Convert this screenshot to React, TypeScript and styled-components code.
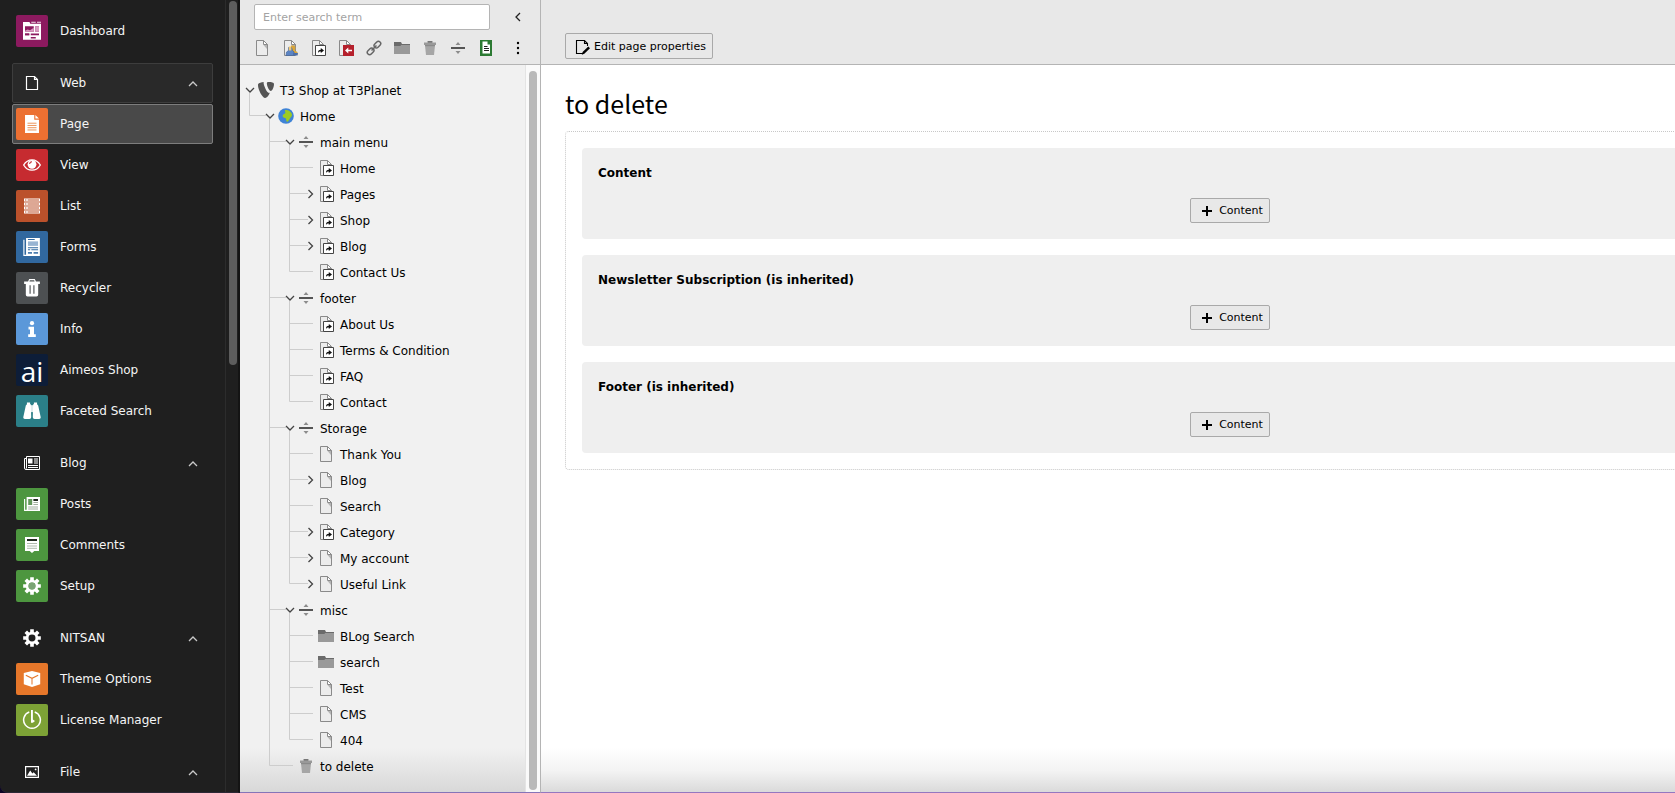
import React from 'react';
import styled, { createGlobalStyle } from 'styled-components';

const GlobalStyle = createGlobalStyle`
  *, *::before, *::after { box-sizing: border-box; }
  body {
    margin: 0;
    overflow: hidden;
    background: #0d0526;
    color: #000;
    font: 12px/18px Verdana, "DejaVu Sans", sans-serif;
  }
  button, input { font: inherit; color: inherit; }
  button { cursor: pointer; }
  ul { list-style: none; margin: 0; padding: 0; }
  svg { display: block; }
`;

/* ---------- shell ---------- */

const Shell = styled.div`
  display: flex;
  height: 100vh;
  overflow: hidden;
`;

const ModuleMenu = styled.nav`
  flex: 0 0 240px;
  display: flex;
  background: #1f1f1f;
  color: #f5f5f5;
  border-right: 2px solid #141414;
  border-bottom: 1px solid #2b2735;
  border-bottom-left-radius: 8px;
  overflow: hidden;
`;

const ModuleList = styled.div`
  flex: 1;
  min-width: 0;
  padding: 11px 12px 0;
  border-right: 1px solid #2c2c2c;
  overflow: hidden;
`;

const ScrollTrack = styled.div<{ $light?: boolean }>`
  flex: 0 0 ${p => (p.$light ? 15 : 12)}px;
  padding: ${p => (p.$light ? '6px 3px 2px' : '1px 1px 0 3px')};
  background: ${p => (p.$light ? '#fafafa' : 'transparent')};
  border-left: ${p => (p.$light ? '1px solid #e4e4e4' : '0')};
`;

const ScrollThumb = styled.div<{ $light?: boolean }>`
  height: ${p => (p.$light ? '100%' : '46%')};
  border-radius: 4px;
  background: ${p => (p.$light ? '#b9b9b9' : '#5d5d5d')};
`;

const ModuleGroup = styled.ul`
  display: flex;
  flex-direction: column;
  gap: 1px;
  margin-bottom: 12px;
`;

const ModuleButton = styled.button<{ $state?: 'active' | 'hover' }>`
  display: flex;
  align-items: center;
  gap: 12px;
  width: 100%;
  height: 40px;
  padding: 0 13px 0 3px;
  text-align: left;
  border-radius: 2px;
  border: 1px solid ${p => (p.$state === 'active' ? '#7d7d7d' : p.$state === 'hover' ? '#3d3d3d' : 'transparent')};
  background: ${p => (p.$state === 'active' ? '#494949' : p.$state === 'hover' ? '#292929' : 'transparent')};
`;

const ModuleIcon = styled.span<{ $color?: string }>`
  display: grid;
  place-items: center;
  flex: 0 0 32px;
  height: 32px;
  border-radius: 2px;
  color: #fff;
  background: ${p => p.$color || 'transparent'};
`;

const ModuleName = styled.span`
  flex: 1;
`;

/* ---------- page tree ---------- */

const TreePanel = styled.aside`
  flex: 0 0 301px;
  display: flex;
  flex-direction: column;
  background: #f1f1f1;
  border-right: 1px solid #b4b4b4;
  border-bottom: 1px solid #8674b8;
`;

const TreeHeader = styled.header`
  flex: 0 0 65px;
  padding: 4px 13px 0 14px;
  background: #e8e8e8;
  border-bottom: 1px solid #b4b4b4;
`;

const SearchRow = styled.div`
  display: flex;
  justify-content: space-between;
`;

const SearchInput = styled.input`
  width: 236px;
  height: 26px;
  padding: 0 8px;
  border: 1px solid #b4b4b4;
  border-radius: 2px;
  background: #fff;
  font-size: 11px;
  outline: none;
  &::placeholder { color: #a3a3a3; opacity: 1; }
`;

const IconButton = styled.button`
  display: grid;
  place-items: center;
  width: 18px;
  height: 26px;
  padding: 0;
  border: 0;
  background: none;
`;

const ToolRow = styled.div`
  display: flex;
  gap: 10px;
  margin: 5px 0 0 -1px;
  & > :last-child { margin-left: auto; }
`;

const TreeBody = styled.div`
  flex: 1;
  min-height: 0;
  display: flex;
  background: linear-gradient(to top, #d8d8d8, #f1f1f1 44px);
`;

const Tree = styled.ul`
  flex: 1;
  min-width: 0;
  padding: 13px 0 0 4px;
  overflow: hidden;
`;

const TreeRow = styled.li`
  display: flex;
  height: 26px;
  line-height: 26px;
  white-space: nowrap;
  & > svg { flex: none; overflow: visible; }
`;

const NodeIcon = styled.span`
  flex: 0 0 16px;
  margin: 4px 6px 0 2px;
`;

/* ---------- content ---------- */

const Content = styled.main`
  flex: 1;
  min-width: 0;
  overflow: hidden;
  display: flex;
  flex-direction: column;
  background: linear-gradient(to top, #dadada, #f4f4f4 22px, #fff 44px);
  border-bottom: 1px solid #9577c0;
`;

const DocHeader = styled.header`
  flex: 0 0 65px;
  display: flex;
  align-items: flex-start;
  padding: 33px 24px 0;
  background: #e8e8e8;
  border-bottom: 1px solid #b4b4b4;
`;

const Button = styled.button<{ $tall?: boolean }>`
  display: inline-flex;
  align-items: center;
  gap: 4px;
  height: ${p => (p.$tall ? 26 : 25)}px;
  padding: 1px 6px 0 8px;
  border: 1px solid #a9a9a9;
  border-radius: 2px;
  background: #e8e8e8;
  font-size: 11px;
  line-height: 16px;
`;

const DocBody = styled.div`
  min-width: 1378px;
  padding: 22px 24px 24px;
`;

const PageTitle = styled.h1`
  margin: 0 0 12px;
  font: 400 25px/32px "Noto Sans CJK SC", sans-serif;
`;

const Grid = styled.div`
  display: flex;
  flex-direction: column;
  gap: 16px;
  padding: 16px;
  border: 1px dotted #c8c8c8;
  border-radius: 4px;
`;

const Column = styled.section`
  display: flex;
  flex-direction: column;
  align-items: center;
  gap: 16px;
  padding: 16px;
  border-radius: 4px;
  background: #efefef;
`;

const ColumnTitle = styled.h2`
  align-self: stretch;
  margin: 0;
  font-size: 12px;
  line-height: 18px;
  font-weight: 700;
`;

/* ---------- glyphs ---------- */

const S = ({ size = 16, children }: { size?: number; children: React.ReactNode }) => (
  <svg width={size} height={size} viewBox="0 0 16 16" fill="currentColor" aria-hidden="true">{children}</svg>
);

const gearPath = (() => {
  const pts: string[] = [];
  for (let i = 0; i < 8; i++) {
    const a = (i * Math.PI) / 4;
    [[-0.3, 5.6], [-0.2, 8], [0.2, 8], [0.3, 5.6]].forEach(([d, r]) => {
      pts.push(`${(8 + r * Math.sin(a + d)).toFixed(2)} ${(8 - r * Math.cos(a + d)).toFixed(2)}`);
    });
  }
  return `M${pts.join('L')}Z M8 4.9a3.1 3.1 0 1 0 0 6.2 3.1 3.1 0 0 0 0-6.2Z`;
})();

const newsPaper = (
  <>
    <path d="M2.5 1.5H15.5V14.5H2A1.5 1.5 0 0 1 .5 13V3.5H2.500z" fill="none" stroke="currentColor" />
    <path d="M2.500 2v11.500" stroke="currentColor" />
    <path d="M4 3.500h4.500v5H4zM10 3.500h4v1h-4zM10 5.500h4v1h-4zM10 7.500h4v1h-4zM4 10h10v1H4zM4 12h10v1H4z" />
  </>
);

const moduleGlyphs: Record<string, React.ReactNode> = {
  dashboard: (
    <S size={20}>
      <path d="M.8 .8h5.200l.6 1.400h8.600V15H.8z" />
      <path d="M7.400 1h3.600M12 1H15.200" stroke="#fff" strokeWidth=".7" />
      <path d="M2.400 4.200h7v4.400h-7zM10.600 4.200h3v4.400h-3zM2.400 10h3.400v1.400H2.400zM7 10h6.600v1.400H7zM7 12.800h4V14H7z" fill="#8c1a5f" />
      <path d="M2.400 7.800l2-1 2 .5 3-2v3.300h-7zM10.600 4.200h3v4.400h-3z" fill="#d79bbf" />
      <path d="M2.400 10h3.400v1.400H2.400z" fill="#8c1a5f" />
    </S>
  ),
  web: <S><path d="M2.500 1.500H10.500L13.500 4.500V14.500H2.500zM10.500 1.500V4.500H13.500" fill="none" stroke="currentColor" strokeWidth="1.200" /></S>,
  page: (
    <S size={18}>
      <path d="M1.800 0H10v4.200h4.200V16H1.800z" /><path d="M11 0l3.200 3.200H11z" />
      <path d="M4 7.300h8M4 9.300h8M4 11.300h8M4 13.300h8" stroke="#e98a4b" strokeWidth=".8" />
    </S>
  ),
  view: (
    <S size={18}>
      <path d="M.6 8C2.400 4.900 5 3.400 8 3.400S13.600 4.900 15.400 8C13.600 11.100 11 12.600 8 12.600S2.400 11.100.6 8z" fill="none" stroke="currentColor" strokeWidth="1.200" />
      <circle cx="8" cy="7.400" r="3.900" /><path d="M5.900 7.200A2.200 2.200 0 0 1 8 5.100" fill="none" stroke="#c62b30" strokeWidth=".9" />
    </S>
  ),
  list: (
    <S>
      <path d="M0 .5h16v3H0zM0 4.500h16v3H0zM0 8.500h16v3H0zM0 12.500h16v3H0z" />
      <path d="M1 2h1.400M3.600 2H15M1 6h1.400M3.600 6H15M1 10h1.400M3.600 10H15M1 14h1.400M3.600 14H15" stroke="#bb512b" strokeWidth="1.100" />
    </S>
  ),
  forms: (
    <S size={18}>
      <path d="M2.700 0H15v16H2.700z" /><path d="M.8 1.600V15.400H3" fill="none" stroke="#fff" />
      <path d="M4.400 1.400h6M4.400 8.600h9M4.400 10.400h2M7.400 10.400h6" stroke="#31689f" strokeWidth=".9" />
      <path d="M4.400 3h9v4h-9z" fill="#98b4d2" /><path d="M4.400 12.400h3.600V14H4.400zM9.400 12.400h4V14h-4z" fill="#4b7cae" />
    </S>
  ),
  recycler: (
    <S size={18}>
      <path d="M5.500 0h5l1 2.200H15V4.500H1V2.200h3.500zM5.700 2.200h4.600L9.900 1.200H6.100z" fillRule="evenodd" />
      <path d="M2.500 4.500h11V14a1.500 1.500 0 0 1-1.500 1.500H4A1.500 1.500 0 0 1 2.500 14z" />
      <path d="M6.300 5.500V13M9.700 5.500V13" stroke="#4d5052" strokeWidth="1" />
    </S>
  ),
  info: <S><circle cx="8" cy="2.200" r="2.100" /><path d="M4.500 5.800H10v7.400h1.800V16H4.200v-2.800H6V8.400H4.500z" /></S>,
  binoculars: (
    <S size={18}>
      <path d="M3.500.5h2.800v1.600H7l.3 11.400a1.600 1.600 0 0 1-1.600 1.600H1.600A1.500 1.500 0 0 1 .3 13.300L2.500 3.200l1-1.100zM12.500.5H9.700v1.600H9l-.3 11.400a1.600 1.600 0 0 0 1.600 1.600h4.100a1.500 1.500 0 0 0 1.300-1.800L13.500 3.200l-1-1.100z" />
      <path d="M6.500 2.800h3V9h-3z" opacity=".85" />
    </S>
  ),
  blog: <S>{newsPaper}</S>,
  posts: (
    <S>
      <path d="M2.600 1H16v14H2.600z" /><path d="M.6 3v11.400H3" fill="none" stroke="#fff" strokeWidth="1.100" />
      <path d="M4.200 3h4v6h-4z" fill="#63985a" /><path d="M9.400 3H14v2H9.400z" fill="#20281f" />
      <path d="M9.400 6.500H14M9.400 8.500H14M4.200 11H14M4.200 13H14" stroke="#8a9a88" strokeWidth=".8" />
    </S>
  ),
  comments: (
    <S>
      <path d="M1 0h14v14h-4.700L8 16l-2.300-2H1z" /><path d="M3 2h10v2H3z" fill="#20281f" />
      <path d="M3 6.500h10M3 9h10M3 11.300h10" stroke="#9aa898" strokeWidth=".8" />
    </S>
  ),
  setup: <S size={18}><path d={gearPath} fillRule="evenodd" /><circle cx="8" cy="8" r="3.100" fill="#7aa574" /></S>,
  gear: <S size={18}><path d={gearPath} fillRule="evenodd" /></S>,
  box: (
    <S size={18}>
      <path d="M8 .8l7.300 1.900v10L8 15.200.7 12.700v-10z" />
      <path d="M2.500 4.600L8 7.400l5.500-2.800M8 7.400v5.400" fill="none" stroke="#e6772a" strokeWidth=".9" />
    </S>
  ),
  license: (
    <S size={20}>
      <path d="M5.800 1.600a6.700 6.700 0 1 0 4.400 0" fill="none" stroke="currentColor" strokeWidth="1.200" />
      <path d="M7.200 0h1.500v7.600l1.700 1.200-1.700 1.400H7.200z" />
    </S>
  ),
  file: (
    <S>
      <path d="M1.600 2.600h12.800v10.800H1.600z" fill="none" stroke="currentColor" strokeWidth="1.200" />
      <path d="M3 11.800l3.200-5.200 2.200 3 1.300-1.300 3.300 3.500z" /><circle cx="11.600" cy="5.400" r=".9" />
    </S>
  ),
};

const AimeosLogo = styled.span`
  font: 28px/34px "Open Sans", sans-serif;
  height: 32px;
`;

const pageBase = (
  <>
    <path d="M2.500.5H9.500L13.500 4.500V15.500H2.500z" fill="#ececec" stroke="#8a8a8a" />
    <path d="M9.500.5V4.500H13.500z" fill="#fff" stroke="#8a8a8a" />
    <path d="M9.500 5H13v4z" fill="#b5b5b5" />
  </>
);

const treeGlyphs: Record<string, React.ReactNode> = {
  page: <S>{pageBase}</S>,
  user: (
    <S>
      {pageBase}
      <path d="M9 5.500h3.500l1 2.500-.8 2.500L15.500 12v3H9z" fill="#d9a53a" />
      <path d="M6.500 7.500h3l1 3L12 12l.5 3.500H4L4.500 12l2-1.500z" fill="#5b84c4" stroke="#3d5f97" strokeWidth=".6" />
      <path d="M6.800 6.500h2.500v4H6.800z" fill="#f0c873" /><path d="M11 13h5l-.5 2.500H11z" fill="#4c6fa8" />
    </S>
  ),
  shortcut: (
    <S>
      <path d="M2.500.5H9.500L13.500 4.500V15.500H2.500z" fill="#ececec" stroke="#8a8a8a" />
      <path d="M9.500.5V4.500H13.500z" fill="#fff" stroke="#8a8a8a" />
      <path d="M5.500 5.500h10v10h-10z" fill="#fff" stroke="#444" />
      <path d="M8 13c0-2.300.8-3.200 2.800-3.200V8L14 10.500l-3.200 2.500v-1.500c-1.400 0-2 .3-2.800 1.500z" fill="#111" />
    </S>
  ),
  mount: (
    <S>
      <path d="M1.500.5H8.500L12.500 4.500V15.500H1.500z" fill="#ececec" stroke="#8a8a8a" />
      <path d="M8.500.5V4.500H12.500z" fill="#fff" stroke="#8a8a8a" />
      <path d="M5 5h11v11H5z" fill="#b5202c" />
      <path d="M7 10.500l3.300-3v2.200H14v1.600h-3.700v2.200z" fill="#fff" />
    </S>
  ),
  link: (
    <S>
      <g fill="none" stroke="#666" strokeWidth="1.500" transform="rotate(-45 8 8)">
        <rect x="-.5" y="5.700" width="7.400" height="4.600" rx="2.300" /><rect x="9.100" y="5.700" width="7.400" height="4.600" rx="2.300" /><path d="M4.500 8h7" />
      </g>
    </S>
  ),
  folder: <S><path d="M0 2h7v2h9V14H0z" fill="#999" /><path d="M0 2h7l1 2h8v1H7L6.500 6H0z" fill="#6b6b6b" /></S>,
  trash: (
    <S>
      <path d="M2 2.500h3.700V1h4.600v1.500H14V5H2z" fill="#999" /><path d="M5.700 1h4.600v1.500H5.700z" fill="#777" />
      <path d="M3 5.500h10L12 15H4z" fill="#a6a6a6" /><path d="M3 5h10v1.200H3z" fill="#8a8a8a" />
    </S>
  ),
  divider: <S><path d="M1 7h14v2H1z" fill="#555" /><path d="M8 2l2.500 3H5.500zM8 14l2.500-3H5.500z" fill="#8c8c8c" /></S>,
  content: (
    <S>
      <path d="M2 0h12v16H2z" fill="#2c7a33" /><path d="M4.500 2h5L12 4.500V14H4.500z" fill="#fff" transform="translate(0 -.5)" />
      <path d="M9.500 1.500h4v3h-4z" fill="#2c7a33" /><path d="M6 6.500h3.500M6 8.500h5M6 10.500h5" stroke="#222" />
    </S>
  ),
  more: <S><circle cx="8" cy="3" r="1.200" /><circle cx="8" cy="8" r="1.200" /><circle cx="8" cy="13" r="1.200" /></S>,
  typo3: (
    <S>
      <path d="M11.800 10.800c-.3.100-.5.100-.8.100-2.200 0-5.400-7.700-5.400-10.200 0-.4.100-.6.200-.7C3.200.3.900 1 .2 2 0 2.300 0 2.700 0 3.200 0 7.200 4.200 16 7.200 16c1.400 0 3.700-2.300 4.600-5.200z" fill="#555" />
      <path d="M10.700 0C13.500 0 16 .5 16 2c0 3.300-2 7-3.100 7-1.900 0-4-5-4-7.500 0-1.200.5-1.500 1.800-1.500z" fill="#555" />
    </S>
  ),
  globe: (
    <S>
      <circle cx="8" cy="8" r="7.800" fill="#3f83d6" />
      <path d="M7 2.200c2.500-.9 5.500 1 6.700 3.300.5 1.500.3 2.600-.6 3.500-1.100 1-1.600 2.300-2.600 3.700-.8 1.200-1.800 1.300-2.200 0-.3-1.200.2-2-1.200-2.600-1.700-.6-2.900-1.300-2.400-2.900.5-1.500 2.300-1.300 2.700-2.500.2-.9-.9-1.500-.4-2.500z" fill="#9ccb22" />
    </S>
  ),
};

const Chevron = ({ dir, color = 'currentColor' }: { dir: 'up' | 'left'; color?: string }) => (
  <svg width="12" height="12" viewBox="0 0 12 12" fill="none" stroke={color} strokeWidth="1.300" aria-hidden="true">
    <path d={dir === 'up' ? 'M2 9L6 5L10 9' : 'M8 2L4 6L8 10'} />
  </svg>
);

/* ---------- data ---------- */

type Module = { name: string; icon: string; color?: string; state?: 'active' | 'hover'; group?: boolean };

const modules: Module[][] = [
  [{ name: 'Dashboard', icon: 'dashboard', color: '#8c1a5f' }],
  [
    { name: 'Web', icon: 'web', group: true, state: 'hover' },
    { name: 'Page', icon: 'page', color: '#ec7032', state: 'active' },
    { name: 'View', icon: 'view', color: '#c62b30' },
    { name: 'List', icon: 'list', color: '#bb512b' },
    { name: 'Forms', icon: 'forms', color: '#31689f' },
    { name: 'Recycler', icon: 'recycler', color: '#4d5052' },
    { name: 'Info', icon: 'info', color: '#5b98d9' },
    { name: 'Aimeos Shop', icon: 'aimeos', color: '#0d1d38' },
    { name: 'Faceted Search', icon: 'binoculars', color: '#2b7f88' },
  ],
  [
    { name: 'Blog', icon: 'blog', group: true },
    { name: 'Posts', icon: 'posts', color: '#4d963f' },
    { name: 'Comments', icon: 'comments', color: '#4d963f' },
    { name: 'Setup', icon: 'setup', color: '#4d963f' },
  ],
  [
    { name: 'NITSAN', icon: 'gear', group: true },
    { name: 'Theme Options', icon: 'box', color: '#e6772a' },
    { name: 'License Manager', icon: 'license', color: '#7da236' },
  ],
  [{ name: 'File', icon: 'file', group: true }],
];

type Node = { name: string; icon: string; closed?: boolean; children?: Node[] };

const tree: Node = {
  name: 'T3 Shop at T3Planet', icon: 'typo3', children: [{
    name: 'Home', icon: 'globe', children: [
      { name: 'main menu', icon: 'divider', children: [
        { name: 'Home', icon: 'shortcut' },
        { name: 'Pages', icon: 'shortcut', closed: true },
        { name: 'Shop', icon: 'shortcut', closed: true },
        { name: 'Blog', icon: 'shortcut', closed: true },
        { name: 'Contact Us', icon: 'shortcut' },
      ] },
      { name: 'footer', icon: 'divider', children: [
        { name: 'About Us', icon: 'shortcut' },
        { name: 'Terms & Condition', icon: 'shortcut' },
        { name: 'FAQ', icon: 'shortcut' },
        { name: 'Contact', icon: 'shortcut' },
      ] },
      { name: 'Storage', icon: 'divider', children: [
        { name: 'Thank You', icon: 'page' },
        { name: 'Blog', icon: 'page', closed: true },
        { name: 'Search', icon: 'page' },
        { name: 'Category', icon: 'shortcut', closed: true },
        { name: 'My account', icon: 'page', closed: true },
        { name: 'Useful Link', icon: 'page', closed: true },
      ] },
      { name: 'misc', icon: 'divider', children: [
        { name: 'BLog Search', icon: 'folder' },
        { name: 'search', icon: 'folder' },
        { name: 'Test', icon: 'page' },
        { name: 'CMS', icon: 'page' },
        { name: '404', icon: 'page' },
      ] },
      { name: 'to delete', icon: 'trash' },
    ],
  }],
};

const tools: [string, string][] = [
  ['page', 'New page'], ['user', 'Backend user section'], ['shortcut', 'Shortcut'], ['mount', 'Mount point'],
  ['link', 'External link'], ['folder', 'Folder'], ['trash', 'Recycler'], ['divider', 'Menu separator'],
  ['content', 'Content page'], ['more', 'More options'],
];

const columns = ['Content', 'Newsletter Subscription (is inherited)', 'Footer (is inherited)'];

/* ---------- tree rendering ---------- */

const GUIDE = '#cdcdcd';

/* One indentation step: passes an ancestor's line through, or joins the node to its parent. */
const Guide = ({ through, join, reach }: { through: boolean; join: boolean; reach: number }) => (
  <svg width="20" height="26" fill="none" stroke={GUIDE} aria-hidden="true">
    {through && <path d="M5.500 0V26" />}
    {join && <path d={through ? `M5.500 11.500H${reach}` : `M5.500 0V11.500H${reach}`} />}
  </svg>
);

const Toggle = ({ node }: { node: Node }) => (
  <svg width="12" height="26" fill="none" aria-hidden="true">
    {node.children && <path d="M5.500 15V26" stroke={GUIDE} />}
    {node.children && <path d="M2 10L6 14L10 10" stroke="#444" strokeWidth="1.300" />}
    {node.closed && <path d="M4.500 8L8.500 12L4.500 16" stroke="#444" strokeWidth="1.300" />}
  </svg>
);

const renderNode = (node: Node, lines: boolean[], key: string): React.ReactNode[] => [
  <TreeRow key={key} role="treeitem" aria-level={lines.length + 1}>
    {lines.map((open, i) => (
      <Guide
        key={i}
        through={open}
        join={i === lines.length - 1}
        reach={node.children ? 22 : node.closed ? 24 : 29}
      />
    ))}
    <Toggle node={node} />
    <NodeIcon>{treeGlyphs[node.icon]}</NodeIcon>
    {node.name}
  </TreeRow>,
  ...(node.children || []).flatMap((child, i, all) =>
    renderNode(child, [...lines, i < all.length - 1], `${key}-${i}`)),
];

export default function App() {
  return (
    <>
      <GlobalStyle />
      <Shell>
        <ModuleMenu aria-label="Modules">
          <ModuleList>
            {modules.map((group, g) => (
              <ModuleGroup key={g}>
                {group.map(m => (
                  <li key={m.name}>
                    <ModuleButton $state={m.state}>
                      <ModuleIcon $color={m.color}>
                        {m.icon === 'aimeos' ? <AimeosLogo>ai</AimeosLogo> : moduleGlyphs[m.icon]}
                      </ModuleIcon>
                      <ModuleName>{m.name}</ModuleName>
                      {m.group && <Chevron dir="up" color="#c9c9c9" />}
                    </ModuleButton>
                  </li>
                ))}
              </ModuleGroup>
            ))}
          </ModuleList>
          <ScrollTrack><ScrollThumb /></ScrollTrack>
        </ModuleMenu>

        <TreePanel>
          <TreeHeader>
            <SearchRow>
              <SearchInput type="text" placeholder="Enter search term" aria-label="Enter search term" />
              <IconButton aria-label="Collapse page tree"><Chevron dir="left" color="#222" /></IconButton>
            </SearchRow>
            <ToolRow>
              {tools.map(([icon, label]) => (
                <IconButton key={icon} aria-label={label}>{treeGlyphs[icon]}</IconButton>
              ))}
            </ToolRow>
          </TreeHeader>
          <TreeBody>
            <Tree role="tree">{renderNode(tree, [], 'n')}</Tree>
            <ScrollTrack $light><ScrollThumb $light /></ScrollTrack>
          </TreeBody>
        </TreePanel>

        <Content>
          <DocHeader>
            <Button $tall>
              <S>
                <path d="M9 14.500H2.500V1.500H10.500L13.500 4.500V7M10.500 1.500V4.500H13.500" fill="none" stroke="#000" strokeWidth="1.100" />
                <path d="M14.300 7.500l1.700 1.700-5.700 5.600-2.500.9.800-2.600z" />
              </S>
              Edit page properties
            </Button>
          </DocHeader>
          <DocBody>
            <PageTitle>to delete</PageTitle>
            <Grid>
              {columns.map(title => (
                <Column key={title}>
                  <ColumnTitle>{title}</ColumnTitle>
                  <Button>
                    <S><path d="M7 3h2v4h4v2H9v4H7V9H3V7h4z" /></S>
                    Content
                  </Button>
                </Column>
              ))}
            </Grid>
          </DocBody>
        </Content>
      </Shell>
    </>
  );
}
